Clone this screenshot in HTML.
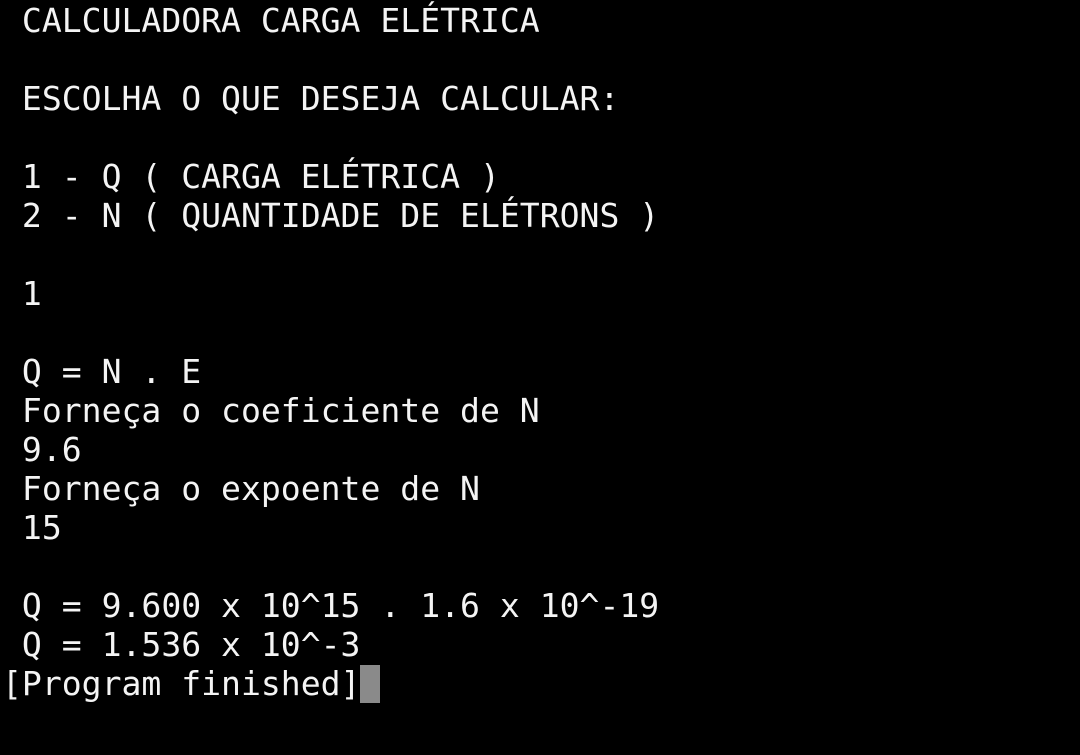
<!DOCTYPE html>
<html><head><meta charset="utf-8"><style>
html,body{margin:0;padding:0;background:#000;width:1080px;height:755px;overflow:hidden}
pre{position:absolute;left:2px;top:1px;margin:0;color:#f4f4f4;font-family:"DejaVu Sans Mono","Liberation Mono",monospace;font-size:33.1px;line-height:39px;letter-spacing:0}
.cur{display:inline-block;width:20px;height:38px;background:#8a8a8a;vertical-align:top;margin-top:1px}
</style></head><body><pre> CALCULADORA CARGA ELÉTRICA

 ESCOLHA O QUE DESEJA CALCULAR:

 1 - Q ( CARGA ELÉTRICA )
 2 - N ( QUANTIDADE DE ELÉTRONS )

 1

 Q = N . E
 Forneça o coeficiente de N
 9.6
 Forneça o expoente de N
 15

 Q = 9.600 x 10^15 . 1.6 x 10^-19
 Q = 1.536 x 10^-3
[Program finished]<span class="cur"></span></pre></body></html>
